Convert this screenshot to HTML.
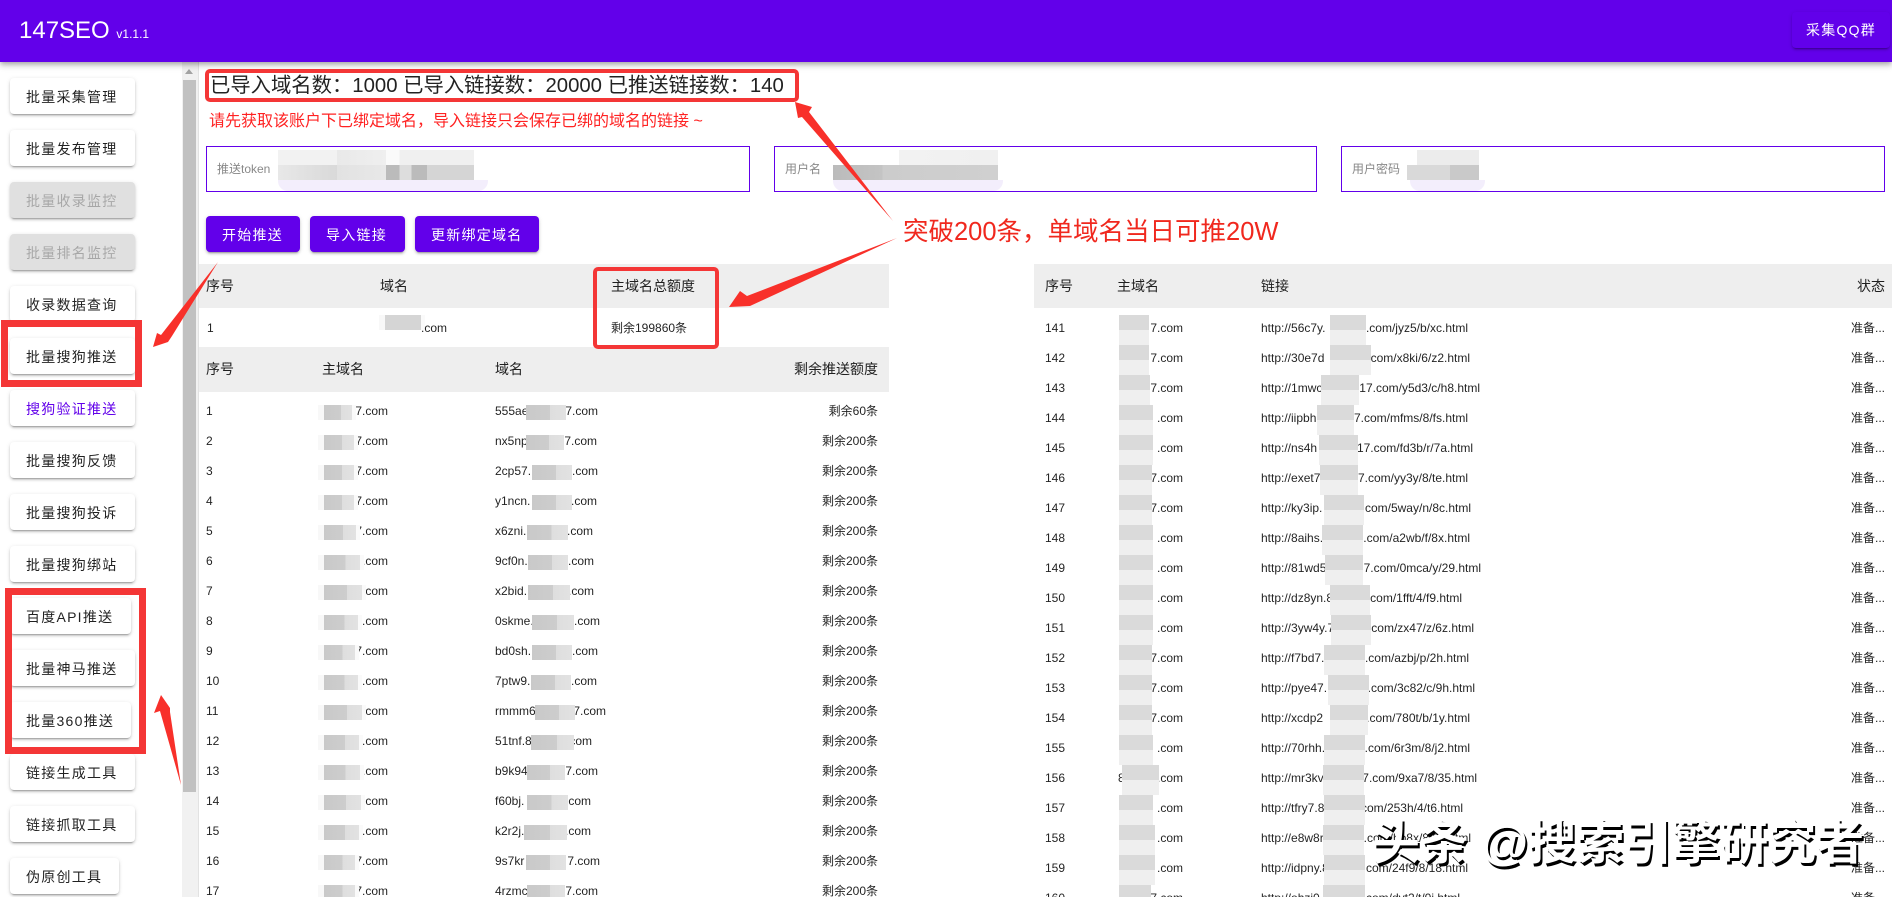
<!DOCTYPE html>
<html lang="zh"><head><meta charset="utf-8"><title>147SEO</title>
<style>
html,body{margin:0;padding:0;width:1892px;height:897px;overflow:hidden;background:#fff}
body{position:relative;font-family:"Liberation Sans","Noto Sans CJK SC",sans-serif;color:rgba(0,0,0,.87);font-size:12px}
.abs,.btn,.r,.h,.inp{position:absolute}
.top{position:absolute;left:0;top:0;width:1892px;height:62px;background:#6200ea;box-shadow:0 2px 4px -1px rgba(0,0,0,.2),0 4px 5px rgba(0,0,0,.14),0 1px 10px rgba(0,0,0,.12);color:#fff;z-index:3}
.btn{height:36px;line-height:39px;box-sizing:border-box;padding-left:16px;font-size:14px;font-weight:400;letter-spacing:1.25px;white-space:nowrap;border-radius:4px;background:#fff;box-shadow:0 3px 1px -2px rgba(0,0,0,.2),0 2px 2px rgba(0,0,0,.14),0 1px 5px rgba(0,0,0,.12)}
.d{background:#e0e0e0;color:rgba(0,0,0,.26)}
.p{background:#6200ea;color:#fff}
.inp{top:146px;height:46px;box-sizing:border-box;border:1px solid #6200ea;color:#888;line-height:44px;padding-left:10px;background:#fff}
.h{background:#eee;font-size:14px;height:44px;line-height:44px;white-space:nowrap}
.h span,.r span{position:absolute;white-space:nowrap}
.r{left:0;width:1892px;height:30px;line-height:30px}
.r i{position:absolute;top:9px;height:15px;background:linear-gradient(90deg,#c9c9c9 0,#cdcdcd 60%,#dedede 60%,#e2e2e2 100%)}
.r i:first-of-type{box-shadow:-6px 0 0 #f8f8f8,4px 0 0 #fafafa}
.q i,.q i:first-of-type{top:2px;height:30px;background:linear-gradient(#dadada 50%,#efefef 50%);box-shadow:none}
.m{position:absolute;height:15px}
</style></head><body>

<div class="top">
<div class="abs" style="left:19px;top:15px;font-size:24px;line-height:32px;white-space:nowrap">147SEO <span style="font-size:12px">v1.1.1</span></div>
<div class="btn p" style="left:1792px;top:12px;width:98px;padding-left:14px;line-height:37px">采集QQ群</div>
</div>

<!-- sidebar -->
<div class="btn" style="left:10px;top:78px;width:125px">批量采集管理</div>
<div class="btn" style="left:10px;top:130px;width:125px">批量发布管理</div>
<div class="btn d" style="left:10px;top:182px;width:125px">批量收录监控</div>
<div class="btn d" style="left:10px;top:234px;width:125px">批量排名监控</div>
<div class="btn" style="left:10px;top:286px;width:125px">收录数据查询</div>
<div class="btn" style="left:10px;top:338px;width:125px">批量搜狗推送</div>
<div class="btn" style="left:10px;top:390px;width:125px;color:#6200ea">搜狗验证推送</div>
<div class="btn" style="left:10px;top:442px;width:125px">批量搜狗反馈</div>
<div class="btn" style="left:10px;top:494px;width:125px">批量搜狗投诉</div>
<div class="btn" style="left:10px;top:546px;width:125px">批量搜狗绑站</div>
<div class="btn" style="left:10px;top:598px;width:121px">百度API推送</div>
<div class="btn" style="left:10px;top:650px;width:125px">批量神马推送</div>
<div class="btn" style="left:10px;top:702px;width:121px">批量360推送</div>
<div class="btn" style="left:10px;top:754px;width:125px">链接生成工具</div>
<div class="btn" style="left:10px;top:806px;width:125px">链接抓取工具</div>
<div class="btn" style="left:10px;top:858px;width:109px">伪原创工具</div>

<!-- scrollbar -->
<div class="abs" style="left:182px;top:62px;width:16px;height:835px;background:#f1f1f1;border-right:1px solid #e2e2e2"></div>
<div class="abs" style="left:183px;top:80px;width:13px;height:712px;background:#c1c1c1"></div>
<div class="abs" style="left:185px;top:69px;width:0;height:0;border-left:4px solid transparent;border-right:4px solid transparent;border-bottom:5px solid #a3a3a3"></div>

<!-- head -->
<div class="abs" style="left:210px;top:72px;font-size:20.340px;line-height:28px;white-space:nowrap;color:#222">已导入域名数：1000 已导入链接数：20000 已推送链接数：140</div>
<div class="abs" style="left:209px;top:111px;font-size:16px;line-height:22px;white-space:nowrap;color:#f22">请先获取该账户下已绑定域名，导入链接只会保存已绑的域名的链接 ~</div>

<div class="inp" style="left:206px;width:544px">推送token</div>
<div class="inp" style="left:774px;width:543px">用户名</div>
<div class="inp" style="left:1341px;width:544px">用户密码</div>
<!-- input blurs -->
<div class="m" style="left:278px;top:150px;width:196px;background:linear-gradient(90deg,#f2f2f2 0,#f2f2f2 30%,#e9e9e9 30%,#efefef 55%,#fafafa 55%,#fafafa 62%,#f0f0f0 62%,#f0f0f0 100%)"></div>
<div class="m" style="left:278px;top:165px;width:196px;background:linear-gradient(90deg,#e8e8e8 0,#d9d9d9 30%,#e2e2e2 30%,#e8e8e8 55%,#bbb 55%,#bbb 62%,#ddd 62%,#ddd 68%,#bbb 68%,#bbb 76%,#d5d5d5 76%,#d5d5d5 100%)"></div>
<div class="m" style="left:278px;top:180px;width:210px;height:11px;background:#f3eefc;border-radius:0 0 10px 10px"></div>
<div class="m" style="left:833px;top:150px;width:165px;background:linear-gradient(90deg,#fff 0,#fff 40%,#f2f2f2 40%,#f0f0f0 100%)"></div>
<div class="m" style="left:833px;top:165px;width:165px;background:linear-gradient(90deg,#bbb 0,#c4c4c4 30%,#ccc 30%,#d0d0d0 100%)"></div>
<div class="m" style="left:833px;top:180px;width:170px;height:11px;background:#f3eefc;border-radius:0 0 10px 10px"></div>
<div class="m" style="left:1417px;top:150px;width:62px;background:#ececec"></div>
<div class="m" style="left:1407px;top:165px;width:72px;background:linear-gradient(90deg,#d9d9d9 0,#d9d9d9 60%,#c9c9c9 60%,#c9c9c9 100%)"></div>
<div class="m" style="left:1410px;top:180px;width:75px;height:11px;background:#f3eefc;border-radius:0 0 10px 10px"></div>

<div class="btn p" style="left:206px;top:216px;width:94px">开始推送</div>
<div class="btn p" style="left:310px;top:216px;width:95px">导入链接</div>
<div class="btn p" style="left:415px;top:216px;width:124px">更新绑定域名</div>

<!-- table 1 -->
<div class="h" style="left:199px;top:264px;width:690px"><span style="left:7px">序号</span><span style="left:181px">域名</span><span style="left:412px">主域名总额度</span></div>
<div class="r" style="top:313px"><span style="left:207px">1</span><i style="left:385px;width:36px;top:2px;background:#d5d5d5"></i><span style="left:421px">.com</span><span style="left:611px">剩余199860条</span></div>

<!-- table 2 -->
<div class="h" style="left:199px;top:347px;width:690px;height:45px;line-height:45px"><span style="left:7px">序号</span><span style="left:123px">主域名</span><span style="left:296px">域名</span><span style="right:11px">剩余推送额度</span></div>
<div class="r" style="top:396px"><span style="left:206px">1</span><span style="right:1504px">7.com</span><i style="left:324px;width:28px"></i><span style="left:495px">555ae</span><span style="right:1294px">7.com</span><i style="left:526px;width:40px"></i><span style="right:1014px">剩余60条</span></div>
<div class="r" style="top:426px"><span style="left:206px">2</span><span style="right:1504px">7.com</span><i style="left:324px;width:30px"></i><span style="left:495px">nx5np</span><span style="right:1295px">7.com</span><i style="left:526px;width:38px"></i><span style="right:1014px">剩余200条</span></div>
<div class="r" style="top:456px"><span style="left:206px">3</span><span style="right:1504px">7.com</span><i style="left:324px;width:30px"></i><span style="left:495px">2cp57.</span><span style="right:1294px">.com</span><i style="left:532px;width:40px"></i><span style="right:1014px">剩余200条</span></div>
<div class="r" style="top:486px"><span style="left:206px">4</span><span style="right:1504px">7.com</span><i style="left:324px;width:30px"></i><span style="left:495px">y1ncn.</span><span style="right:1295px">.com</span><i style="left:532px;width:40px"></i><span style="right:1014px">剩余200条</span></div>
<div class="r" style="top:516px"><span style="left:206px">5</span><span style="right:1504px">7.com</span><i style="left:324px;width:32px"></i><span style="left:495px">x6zni.</span><span style="right:1299px">.com</span><i style="left:527px;width:41px"></i><span style="right:1014px">剩余200条</span></div>
<div class="r" style="top:546px"><span style="left:206px">6</span><span style="right:1504px">7.com</span><i style="left:324px;width:36px"></i><span style="left:495px">9cf0n.</span><span style="right:1298px">.com</span><i style="left:528px;width:40px"></i><span style="right:1014px">剩余200条</span></div>
<div class="r" style="top:576px"><span style="left:206px">7</span><span style="right:1504px">7.com</span><i style="left:324px;width:38px"></i><span style="left:495px">x2bid.</span><span style="right:1298px">.com</span><i style="left:528px;width:42px"></i><span style="right:1014px">剩余200条</span></div>
<div class="r" style="top:606px"><span style="left:206px">8</span><span style="right:1504px">7.com</span><i style="left:324px;width:34px"></i><span style="left:495px">0skme.</span><span style="right:1292px">.com</span><i style="left:532px;width:42px"></i><span style="right:1014px">剩余200条</span></div>
<div class="r" style="top:636px"><span style="left:206px">9</span><span style="right:1504px">7.com</span><i style="left:324px;width:31px"></i><span style="left:495px">bd0sh.</span><span style="right:1294px">.com</span><i style="left:532px;width:40px"></i><span style="right:1014px">剩余200条</span></div>
<div class="r" style="top:666px"><span style="left:206px">10</span><span style="right:1504px">7.com</span><i style="left:324px;width:34px"></i><span style="left:495px">7ptw9.</span><span style="right:1295px">.com</span><i style="left:531px;width:40px"></i><span style="right:1014px">剩余200条</span></div>
<div class="r" style="top:696px"><span style="left:206px">11</span><span style="right:1504px">7.com</span><i style="left:324px;width:38px"></i><span style="left:495px">rmmm6</span><span style="right:1286px">7.com</span><i style="left:535px;width:40px"></i><span style="right:1014px">剩余200条</span></div>
<div class="r" style="top:726px"><span style="left:206px">12</span><span style="right:1504px">7.com</span><i style="left:324px;width:35px"></i><span style="left:495px">51tnf.8</span><span style="right:1300px">.com</span><i style="left:531px;width:43px"></i><span style="right:1014px">剩余200条</span></div>
<div class="r" style="top:756px"><span style="left:206px">13</span><span style="right:1504px">7.com</span><i style="left:324px;width:36px"></i><span style="left:495px">b9k94</span><span style="right:1294px">7.com</span><i style="left:527px;width:38px"></i><span style="right:1014px">剩余200条</span></div>
<div class="r" style="top:786px"><span style="left:206px">14</span><span style="right:1504px">.com</span><i style="left:324px;width:37px"></i><span style="left:495px">f60bj.</span><span style="right:1301px">.com</span><i style="left:527px;width:41px"></i><span style="right:1014px">剩余200条</span></div>
<div class="r" style="top:816px"><span style="left:206px">15</span><span style="right:1504px">7.com</span><i style="left:324px;width:35px"></i><span style="left:495px">k2r2j.</span><span style="right:1301px">.com</span><i style="left:524px;width:43px"></i><span style="right:1014px">剩余200条</span></div>
<div class="r" style="top:846px"><span style="left:206px">16</span><span style="right:1504px">7.com</span><i style="left:324px;width:31px"></i><span style="left:495px">9s7kr</span><span style="right:1292px">7.com</span><i style="left:526px;width:40px"></i><span style="right:1014px">剩余200条</span></div>
<div class="r" style="top:876px"><span style="left:206px">17</span><span style="right:1504px">7.com</span><i style="left:324px;width:31px"></i><span style="left:495px">4rzmc</span><span style="right:1294px">7.com</span><i style="left:527px;width:38px"></i><span style="right:1014px">剩余200条</span></div>

<!-- right table -->
<div class="h" style="left:1034px;top:264px;width:858px"><span style="left:11px">序号</span><span style="left:83px">主域名</span><span style="left:227px">链接</span><span style="right:7px">状态</span></div>
<div class="r q" style="top:313px"><span style="left:1045px">141</span><span style="right:709px">7.com</span><i style="left:1119px;width:30px"></i><span style="left:1261px">http://56c7y.</span><span style="right:424px">7.com/jyz5/b/xc.html</span><i style="left:1330px;width:36px"></i><span style="left:1851px">准备...</span></div>
<div class="r q" style="top:343px"><span style="left:1045px">142</span><span style="right:709px">7.com</span><i style="left:1119px;width:30px"></i><span style="left:1261px">http://30e7d</span><span style="right:422px">7.com/x8ki/6/z2.html</span><i style="left:1330px;width:41px"></i><span style="left:1851px">准备...</span></div>
<div class="r q" style="top:373px"><span style="left:1045px">143</span><span style="right:709px">7.com</span><i style="left:1119px;width:31px"></i><span style="left:1261px">http://1mwc</span><span style="right:412px">17.com/y5d3/c/h8.html</span><i style="left:1321px;width:38px"></i><span style="left:1851px">准备...</span></div>
<div class="r q" style="top:403px"><span style="left:1045px">144</span><span style="right:709px">.com</span><i style="left:1119px;width:34px"></i><span style="left:1261px">http://iipbh</span><span style="right:424px">7.com/mfms/8/fs.html</span><i style="left:1317px;width:37px"></i><span style="left:1851px">准备...</span></div>
<div class="r q" style="top:433px"><span style="left:1045px">145</span><span style="right:709px">.com</span><i style="left:1119px;width:34px"></i><span style="left:1261px">http://ns4h</span><span style="right:419px">17.com/fd3b/r/7a.html</span><i style="left:1319px;width:39px"></i><span style="left:1851px">准备...</span></div>
<div class="r q" style="top:463px"><span style="left:1045px">146</span><span style="right:709px">7.com</span><i style="left:1119px;width:33px"></i><span style="left:1261px">http://exet7</span><span style="right:424px">7.com/yy3y/8/te.html</span><i style="left:1320px;width:38px"></i><span style="left:1851px">准备...</span></div>
<div class="r q" style="top:493px"><span style="left:1045px">147</span><span style="right:709px">7.com</span><i style="left:1119px;width:33px"></i><span style="left:1261px">http://ky3ip.</span><span style="right:421px">7.com/5way/n/8c.html</span><i style="left:1324px;width:40px"></i><span style="left:1851px">准备...</span></div>
<div class="r q" style="top:523px"><span style="left:1045px">148</span><span style="right:709px">.com</span><i style="left:1119px;width:34px"></i><span style="left:1261px">http://8aihs.</span><span style="right:422px">7.com/a2wb/f/8x.html</span><i style="left:1322px;width:41px"></i><span style="left:1851px">准备...</span></div>
<div class="r q" style="top:553px"><span style="left:1045px">149</span><span style="right:709px">.com</span><i style="left:1119px;width:34px"></i><span style="left:1261px">http://81wd5</span><span style="right:411px">7.com/0mca/y/29.html</span><i style="left:1325px;width:38px"></i><span style="left:1851px">准备...</span></div>
<div class="r q" style="top:583px"><span style="left:1045px">150</span><span style="right:709px">.com</span><i style="left:1119px;width:34px"></i><span style="left:1261px">http://dz8yn.8</span><span style="right:430px">7.com/1fft/4/f9.html</span><i style="left:1330px;width:40px"></i><span style="left:1851px">准备...</span></div>
<div class="r q" style="top:613px"><span style="left:1045px">151</span><span style="right:709px">.com</span><i style="left:1119px;width:34px"></i><span style="left:1261px">http://3yw4y.7</span><span style="right:418px">7.com/zx47/z/6z.html</span><i style="left:1331px;width:40px"></i><span style="left:1851px">准备...</span></div>
<div class="r q" style="top:643px"><span style="left:1045px">152</span><span style="right:709px">7.com</span><i style="left:1119px;width:33px"></i><span style="left:1261px">http://f7bd7.</span><span style="right:423px">7.com/azbj/p/2h.html</span><i style="left:1324px;width:41px"></i><span style="left:1851px">准备...</span></div>
<div class="r q" style="top:673px"><span style="left:1045px">153</span><span style="right:709px">7.com</span><i style="left:1119px;width:33px"></i><span style="left:1261px">http://pye47.</span><span style="right:417px">7.com/3c82/c/9h.html</span><i style="left:1328px;width:41px"></i><span style="left:1851px">准备...</span></div>
<div class="r q" style="top:703px"><span style="left:1045px">154</span><span style="right:709px">7.com</span><i style="left:1119px;width:33px"></i><span style="left:1261px">http://xcdp2</span><span style="right:422px">7.com/780t/b/1y.html</span><i style="left:1330px;width:38px"></i><span style="left:1851px">准备...</span></div>
<div class="r q" style="top:733px"><span style="left:1045px">155</span><span style="right:709px">.com</span><i style="left:1119px;width:34px"></i><span style="left:1261px">http://70rhh.</span><span style="right:422px">7.com/6r3m/8/j2.html</span><i style="left:1324px;width:41px"></i><span style="left:1851px">准备...</span></div>
<div class="r q" style="top:763px"><span style="left:1045px">156</span><span style="right:709px">.com</span><span style="left:1118px">8</span><i style="left:1122px;width:37px"></i><span style="left:1261px">http://mr3kv</span><span style="right:415px">7.com/9xa7/8/35.html</span><i style="left:1323px;width:41px"></i><span style="left:1851px">准备...</span></div>
<div class="r q" style="top:793px"><span style="left:1045px">157</span><span style="right:709px">.com</span><i style="left:1119px;width:34px"></i><span style="left:1261px">http://tfry7.8</span><span style="right:429px">7.com/253h/4/t6.html</span><i style="left:1324px;width:41px"></i><span style="left:1851px">准备...</span></div>
<div class="r q" style="top:823px"><span style="left:1045px">158</span><span style="right:709px">.com</span><i style="left:1119px;width:36px"></i><span style="left:1261px">http://e8w8r</span><span style="right:421px">7.com/hb8x/8/3x.html</span><i style="left:1323px;width:41px"></i><span style="left:1851px">准备...</span></div>
<div class="r q" style="top:853px"><span style="left:1045px">159</span><span style="right:709px">.com</span><i style="left:1119px;width:36px"></i><span style="left:1261px">http://idpny.8</span><span style="right:424px">7.com/24f9/8/18.html</span><i style="left:1324px;width:41px"></i><span style="left:1851px">准备...</span></div>
<div class="r q" style="top:883px"><span style="left:1045px">160</span><span style="right:709px">7.com</span><i style="left:1119px;width:32px"></i><span style="left:1261px">http://ohzi0.</span><span style="right:432px">7.com/dvt2/t/0i.html</span><i style="left:1323px;width:42px"></i><span style="left:1851px">准备...</span></div>

<!-- annotations -->
<svg class="abs" style="left:0;top:0;z-index:5" width="1892" height="897" viewBox="0 0 1892 897">
<g fill="none" stroke="#f43636">
<rect x="207" y="71" width="590" height="29" rx="3" stroke-width="4"/>
<rect x="595" y="269" width="122" height="78" rx="3" stroke-width="4"/>
<rect x="4.500" y="323.500" width="134" height="60" stroke-width="7"/>
<rect x="8.500" y="591.500" width="134" height="159" stroke-width="7"/>
</g>
<g fill="#f8302a">
<polygon points="893,221 802,117 798,118 795,102 812,107 809,112"/>
<polygon points="897,238 750,306 729,307 740,291 747,296"/>
<polygon points="218,262 172,336 168,342 153,347 157,333 161,335"/>
<polygon points="181,785 170,712 170,708 161,695 154,713 160,711"/>
</g>
</svg>
<div class="abs" style="left:903px;top:214px;font-size:25.500px;line-height:36px;white-space:nowrap;color:#f0281e;z-index:6">突破200条，单域名当日可推20W</div>
<div class="abs" style="left:1372px;top:813px;font-size:48px;font-weight:700;line-height:62px;white-space:nowrap;color:#fff;text-shadow:2px 3px 0 #000;z-index:7">头条 @搜索引擎研究者</div>
</body></html>
